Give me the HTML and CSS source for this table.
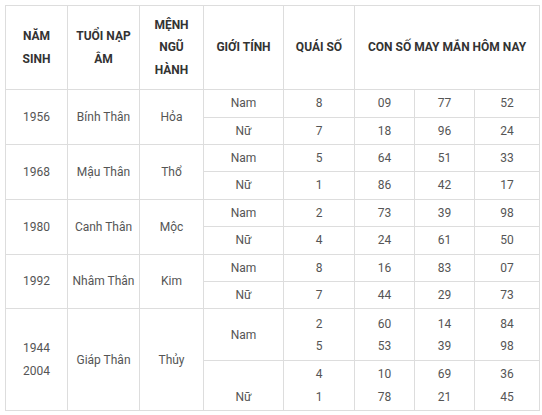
FILE: index.html
```html
<!DOCTYPE html>
<html lang="vi">
<head>
<meta charset="utf-8">
<link rel="stylesheet" href="styles.css">
</head>
<body>
<table class="luck">
<colgroup>
<col class="c1"><col class="c2"><col class="c3"><col class="c4"><col class="c5"><col class="c6"><col class="c7"><col class="c8">
</colgroup>
<thead>
<tr>
<th>NĂM<br>SINH</th>
<th>TUỔI NẠP<br>ÂM</th>
<th>MỆNH<br>NGŨ<br>HÀNH</th>
<th>GIỚI TÍNH</th>
<th>QUÁI SỐ</th>
<th colspan="3">CON SỐ MAY MẮN HÔM NAY</th>
</tr>
</thead>
<tbody>
<tr><td rowspan="2">1956</td><td rowspan="2">Bính Thân</td><td rowspan="2">Hỏa</td><td>Nam</td><td>8</td><td>09</td><td>77</td><td>52</td></tr>
<tr><td>Nữ</td><td>7</td><td>18</td><td>96</td><td>24</td></tr>
<tr><td rowspan="2">1968</td><td rowspan="2">Mậu Thân</td><td rowspan="2">Thổ</td><td>Nam</td><td>5</td><td>64</td><td>51</td><td>33</td></tr>
<tr><td>Nữ</td><td>1</td><td>86</td><td>42</td><td>17</td></tr>
<tr><td rowspan="2">1980</td><td rowspan="2">Canh Thân</td><td rowspan="2">Mộc</td><td>Nam</td><td>2</td><td>73</td><td>39</td><td>98</td></tr>
<tr><td>Nữ</td><td>4</td><td>24</td><td>61</td><td>50</td></tr>
<tr><td rowspan="2">1992</td><td rowspan="2">Nhâm Thân</td><td rowspan="2">Kim</td><td>Nam</td><td>8</td><td>16</td><td>83</td><td>07</td></tr>
<tr><td>Nữ</td><td>7</td><td>44</td><td>29</td><td>73</td></tr>
<tr class="tall"><td rowspan="2">1944<br>2004</td><td rowspan="2">Giáp Thân</td><td rowspan="2">Thủy</td><td>Nam</td><td>2<br>5</td><td>60<br>53</td><td>14<br>39</td><td>84<br>98</td></tr>
<tr class="tall2"><td><br>Nữ</td><td>4<br>1</td><td>10<br>78</td><td>69<br>21</td><td>36<br>45</td></tr>
</tbody>
</table>
</body>
</html>
```

FILE: styles.css
```css
html, body {
  margin: 0;
  padding: 0;
  background: #fff;
}
body {
  padding: 5px 0 0 5px;
  font-family: Roboto, "Liberation Sans", Arial, sans-serif;
}
.luck {
  border-collapse: collapse;
  table-layout: fixed;
  width: 535px;
  font-size: 12px;
  color: #555;
}
.c1 { width: 62px; }
.c2 { width: 72px; }
.c3 { width: 64px; }
.c4 { width: 80px; }
.c5 { width: 71px; }
.c6 { width: 60px; }
.c7 { width: 60px; }
.c8 { width: 65px; }
.luck th,
.luck td {
  border: 1px solid #ddd;
  text-align: center;
  vertical-align: middle;
  line-height: 22.4px;
}
.luck th {
  padding: 8px 4px;
  font-weight: bold;
  color: #333;
}
.luck td {
  padding: 2px 4px;
}
.luck tr.tall td {
  height: 47px;
}
```
